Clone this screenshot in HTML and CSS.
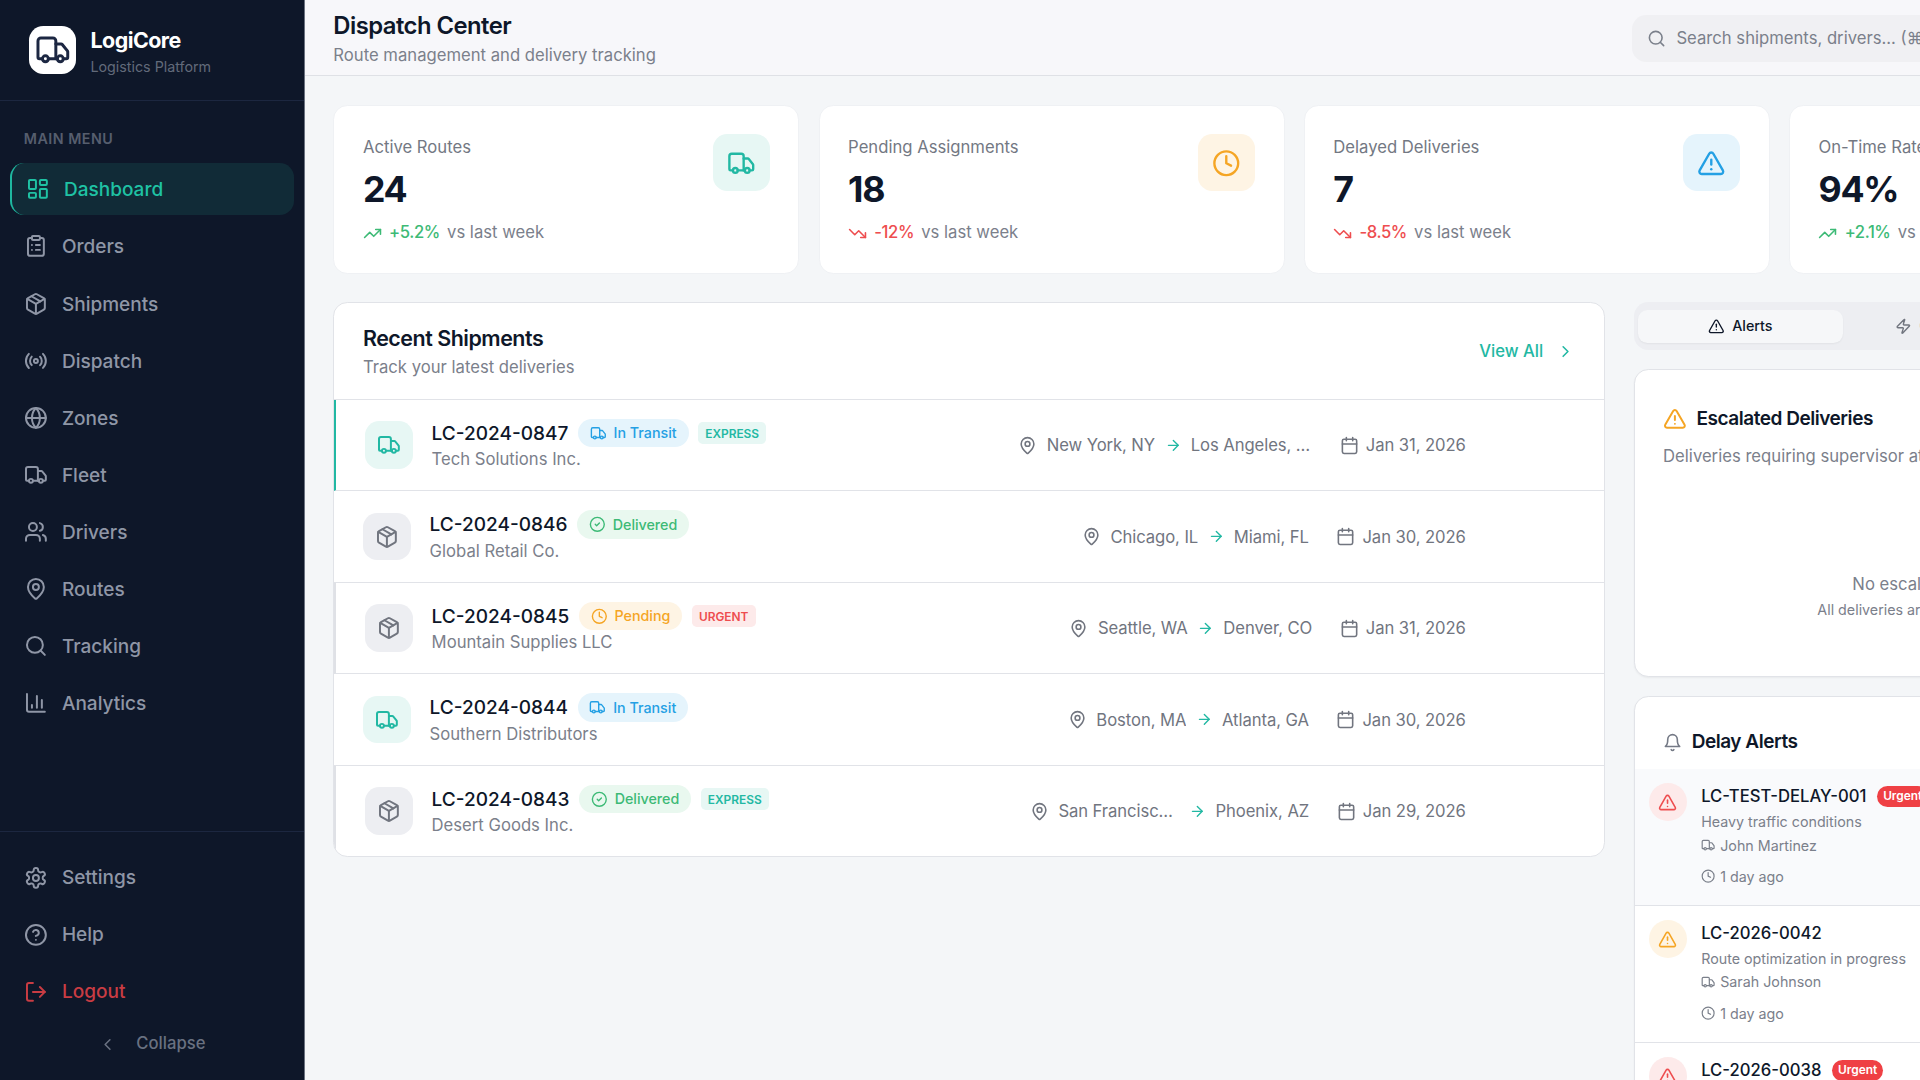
FILE: index.html
```html
<!DOCTYPE html>
<html lang="en">
<head>
    <meta charset="UTF-8">
    <meta name="viewport" content="width=device-width, initial-scale=1.0">
    <title>LogiCore - Dispatch Center</title>
    <link rel="stylesheet" href="styles.css">
</head>
<body>
    <!-- Icon set -->
    <svg class="sprite" xmlns="http://www.w3.org/2000/svg">
        <symbol id="i-dashboard" viewBox="0 0 24 24"><rect x="3" y="3" width="7" height="9" rx="1"/><rect x="14" y="3" width="7" height="5" rx="1"/><rect x="14" y="12" width="7" height="9" rx="1"/><rect x="3" y="16" width="7" height="5" rx="1"/></symbol>
        <symbol id="i-clipboard" viewBox="0 0 24 24"><rect x="8" y="2" width="8" height="4" rx="1"/><path d="M16 4h2a2 2 0 0 1 2 2v14a2 2 0 0 1-2 2H6a2 2 0 0 1-2-2V6a2 2 0 0 1 2-2h2"/><path d="M12 11h4M12 16h4M8 11h.01M8 16h.01"/></symbol>
        <symbol id="i-package" viewBox="0 0 24 24"><path d="M11 21.73a2 2 0 0 0 2 0l7-4A2 2 0 0 0 21 16V8a2 2 0 0 0-1-1.73l-7-4a2 2 0 0 0-2 0l-7 4A2 2 0 0 0 3 8v8a2 2 0 0 0 1 1.73z"/><path d="M12 22V12"/><path d="M3.29 7 12 12l8.71-5"/><path d="m7.5 4.27 9 5.15"/></symbol>
        <symbol id="i-radio" viewBox="0 0 24 24"><path d="M4.9 19.1C1 15.2 1 8.8 4.9 4.9"/><path d="M7.8 16.2c-2.3-2.3-2.3-6.1 0-8.5"/><circle cx="12" cy="12" r="2"/><path d="M16.2 7.8c2.3 2.3 2.3 6.1 0 8.5"/><path d="M19.1 4.9C23 8.8 23 15.1 19.1 19"/></symbol>
        <symbol id="i-globe" viewBox="0 0 24 24"><circle cx="12" cy="12" r="10"/><path d="M12 2a14.5 14.5 0 0 0 0 20 14.5 14.5 0 0 0 0-20"/><path d="M2 12h20"/></symbol>
        <symbol id="i-truck" viewBox="0 0 24 24"><path d="M14 18V6a2 2 0 0 0-2-2H4a2 2 0 0 0-2 2v11a1 1 0 0 0 1 1h2"/><path d="M15 18H9"/><path d="M19 18h2a1 1 0 0 0 1-1v-3.65a1 1 0 0 0-.22-.624l-3.48-4.35A1 1 0 0 0 17.52 8H14"/><circle cx="17" cy="18" r="2"/><circle cx="7" cy="18" r="2"/></symbol>
        <symbol id="i-users" viewBox="0 0 24 24"><path d="M16 21v-2a4 4 0 0 0-4-4H6a4 4 0 0 0-4 4v2"/><circle cx="9" cy="7" r="4"/><path d="M22 21v-2a4 4 0 0 0-3-3.87"/><path d="M16 3.13a4 4 0 0 1 0 7.75"/></symbol>
        <symbol id="i-pin" viewBox="0 0 24 24"><path d="M20 10c0 4.993-5.539 10.193-7.399 11.799a1 1 0 0 1-1.202 0C9.539 20.193 4 14.993 4 10a8 8 0 0 1 16 0"/><circle cx="12" cy="10" r="3"/></symbol>
        <symbol id="i-search" viewBox="0 0 24 24"><circle cx="11" cy="11" r="8"/><path d="m21 21-4.3-4.3"/></symbol>
        <symbol id="i-chart" viewBox="0 0 24 24"><path d="M3 3v16a2 2 0 0 0 2 2h16"/><path d="M18 17V9M13 17V5M8 17v-3"/></symbol>
        <symbol id="i-settings" viewBox="0 0 24 24"><path d="M12.22 2h-.44a2 2 0 0 0-2 2v.18a2 2 0 0 1-1 1.73l-.43.25a2 2 0 0 1-2 0l-.15-.08a2 2 0 0 0-2.73.73l-.22.38a2 2 0 0 0 .73 2.73l.15.1a2 2 0 0 1 1 1.72v.51a2 2 0 0 1-1 1.74l-.15.09a2 2 0 0 0-.73 2.73l.22.38a2 2 0 0 0 2.73.73l.15-.08a2 2 0 0 1 2 0l.43.25a2 2 0 0 1 1 1.73V20a2 2 0 0 0 2 2h.44a2 2 0 0 0 2-2v-.18a2 2 0 0 1 1-1.73l.43-.25a2 2 0 0 1 2 0l.15.08a2 2 0 0 0 2.73-.73l.22-.39a2 2 0 0 0-.73-2.73l-.15-.08a2 2 0 0 1-1-1.74v-.5a2 2 0 0 1 1-1.74l.15-.09a2 2 0 0 0 .73-2.73l-.22-.38a2 2 0 0 0-2.73-.73l-.15.08a2 2 0 0 1-2 0l-.43-.25a2 2 0 0 1-1-1.73V4a2 2 0 0 0-2-2z"/><circle cx="12" cy="12" r="3"/></symbol>
        <symbol id="i-help" viewBox="0 0 24 24"><circle cx="12" cy="12" r="10"/><path d="M9.09 9a3 3 0 0 1 5.83 1c0 2-3 3-3 3"/><path d="M12 17h.01"/></symbol>
        <symbol id="i-logout" viewBox="0 0 24 24"><path d="M9 21H5a2 2 0 0 1-2-2V5a2 2 0 0 1 2-2h4"/><path d="m16 17 5-5-5-5"/><path d="M21 12H9"/></symbol>
        <symbol id="i-left" viewBox="0 0 24 24"><path d="m15 18-6-6 6-6"/></symbol>
        <symbol id="i-right" viewBox="0 0 24 24"><path d="m9 18 6-6-6-6"/></symbol>
        <symbol id="i-arrow" viewBox="0 0 24 24"><path d="M5 12h14"/><path d="m12 5 7 7-7 7"/></symbol>
        <symbol id="i-up" viewBox="0 0 24 24"><path d="m22 7-8.5 8.5-5-5L2 17"/><path d="M16 7h6v6"/></symbol>
        <symbol id="i-down" viewBox="0 0 24 24"><path d="m22 17-8.5-8.5-5 5L2 7"/><path d="M16 17h6v-6"/></symbol>
        <symbol id="i-clock" viewBox="0 0 24 24"><circle cx="12" cy="12" r="10"/><path d="M12 6v6l4 2"/></symbol>
        <symbol id="i-alert" viewBox="0 0 24 24"><path d="m21.73 18-8-14a2 2 0 0 0-3.48 0l-8 14A2 2 0 0 0 4 21h16a2 2 0 0 0 1.73-3"/><path d="M12 9v4"/><path d="M12 17h.01"/></symbol>
        <symbol id="i-check" viewBox="0 0 24 24"><circle cx="12" cy="12" r="10"/><path d="m9 12 2 2 4-4"/></symbol>
        <symbol id="i-calendar" viewBox="0 0 24 24"><path d="M8 2v4M16 2v4"/><rect x="3" y="4" width="18" height="18" rx="2"/><path d="M3 10h18"/></symbol>
        <symbol id="i-zap" viewBox="0 0 24 24"><path d="M4 14a1 1 0 0 1-.78-1.63l9.9-10.2a.5.5 0 0 1 .86.46l-1.92 6.02A1 1 0 0 0 13 10h7a1 1 0 0 1 .78 1.63l-9.9 10.2a.5.5 0 0 1-.86-.46l1.92-6.02A1 1 0 0 0 11 14z"/></symbol>
        <symbol id="i-bell" viewBox="0 0 24 24"><path d="M6 8a6 6 0 0 1 12 0c0 7 3 9 3 9H3s3-2 3-9"/><path d="M10.3 21a1.94 1.94 0 0 0 3.4 0"/></symbol>
    </svg>

    <div class="app">
        <aside class="sidebar">
            <div class="brand">
                <div class="brand-logo"><svg class="icon icon-30"><use href="#i-truck"/></svg></div>
                <div>
                    <div class="brand-name">LogiCore</div>
                    <div class="brand-sub">Logistics Platform</div>
                </div>
            </div>
            <nav class="nav">
                <div class="nav-label">Main Menu</div>
                <a class="nav-item active"><svg class="icon icon-20"><use href="#i-dashboard"/></svg>Dashboard</a>
                <a class="nav-item"><svg class="icon icon-20"><use href="#i-clipboard"/></svg>Orders</a>
                <a class="nav-item"><svg class="icon icon-20"><use href="#i-package"/></svg>Shipments</a>
                <a class="nav-item"><svg class="icon icon-20"><use href="#i-radio"/></svg>Dispatch</a>
                <a class="nav-item"><svg class="icon icon-20"><use href="#i-globe"/></svg>Zones</a>
                <a class="nav-item"><svg class="icon icon-20"><use href="#i-truck"/></svg>Fleet</a>
                <a class="nav-item"><svg class="icon icon-20"><use href="#i-users"/></svg>Drivers</a>
                <a class="nav-item"><svg class="icon icon-20"><use href="#i-pin"/></svg>Routes</a>
                <a class="nav-item"><svg class="icon icon-20"><use href="#i-search"/></svg>Tracking</a>
                <a class="nav-item"><svg class="icon icon-20"><use href="#i-chart"/></svg>Analytics</a>
            </nav>
            <div class="sidebar-footer">
                <a class="nav-item"><svg class="icon icon-20"><use href="#i-settings"/></svg>Settings</a>
                <a class="nav-item"><svg class="icon icon-20"><use href="#i-help"/></svg>Help</a>
                <a class="nav-item logout"><svg class="icon icon-20"><use href="#i-logout"/></svg>Logout</a>
                <a class="collapse"><svg class="icon icon-16"><use href="#i-left"/></svg>Collapse</a>
            </div>
        </aside>

        <div class="main">
            <header class="header">
                <div>
                    <h1 class="page-title">Dispatch Center</h1>
                    <p class="page-sub">Route management and delivery tracking</p>
                </div>
                <div class="header-tools">
                    <div class="search"><svg class="icon icon-16"><use href="#i-search"/></svg><span>Search shipments, drivers... (⌘K)</span></div>
                </div>
            </header>

            <div class="content">
                <!-- Stat cards -->
                <section class="stats">
                    <div class="stat-card">
                        <div>
                            <div class="stat-label">Active Routes</div>
                            <div class="stat-value">24</div>
                            <div class="stat-change up"><svg class="icon icon-16"><use href="#i-up"/></svg><b>+5.2%</b><span>vs last week</span></div>
                        </div>
                        <div class="stat-icon teal"><svg class="icon icon-24"><use href="#i-truck"/></svg></div>
                    </div>
                    <div class="stat-card">
                        <div>
                            <div class="stat-label">Pending Assignments</div>
                            <div class="stat-value">18</div>
                            <div class="stat-change down"><svg class="icon icon-16"><use href="#i-down"/></svg><b>-12%</b><span>vs last week</span></div>
                        </div>
                        <div class="stat-icon amber"><svg class="icon icon-24"><use href="#i-clock"/></svg></div>
                    </div>
                    <div class="stat-card">
                        <div>
                            <div class="stat-label">Delayed Deliveries</div>
                            <div class="stat-value">7</div>
                            <div class="stat-change down"><svg class="icon icon-16"><use href="#i-down"/></svg><b>-8.5%</b><span>vs last week</span></div>
                        </div>
                        <div class="stat-icon blue"><svg class="icon icon-24"><use href="#i-alert"/></svg></div>
                    </div>
                    <div class="stat-card">
                        <div>
                            <div class="stat-label">On-Time Rate</div>
                            <div class="stat-value">94%</div>
                            <div class="stat-change up"><svg class="icon icon-16"><use href="#i-up"/></svg><b>+2.1%</b><span>vs last week</span></div>
                        </div>
                        <div class="stat-icon teal"><svg class="icon icon-24"><use href="#i-check"/></svg></div>
                    </div>
                </section>

                <div class="columns">
                    <!-- Recent shipments -->
                    <section class="card shipments">
                        <div class="shipments-head">
                            <div>
                                <h2 class="card-title large">Recent Shipments</h2>
                                <p class="card-sub">Track your latest deliveries</p>
                            </div>
                            <a class="view-all">View All<svg class="icon icon-16"><use href="#i-right"/></svg></a>
                        </div>
                        <div class="row bar bar-teal">
                            <div class="row-icon teal"><svg class="icon icon-20"><use href="#i-truck"/></svg></div>
                            <div class="row-info">
                                <div class="row-title"><span>LC-2024-0847</span><span class="badge blue"><svg class="icon icon-14"><use href="#i-truck"/></svg>In Transit</span><span class="tag teal">EXPRESS</span></div>
                                <div class="row-sub">Tech Solutions Inc.</div>
                            </div>
                            <div class="route"><svg class="icon icon-16"><use href="#i-pin"/></svg><span>New York, NY</span><svg class="icon icon-14 arrow"><use href="#i-arrow"/></svg><span>Los Angeles, CA</span></div>
                            <div class="date"><svg class="icon icon-16"><use href="#i-calendar"/></svg>Jan 31, 2026</div>
                        </div>
                        <div class="row">
                            <div class="row-icon gray"><svg class="icon icon-20"><use href="#i-package"/></svg></div>
                            <div class="row-info">
                                <div class="row-title"><span>LC-2024-0846</span><span class="badge green"><svg class="icon icon-14"><use href="#i-check"/></svg>Delivered</span></div>
                                <div class="row-sub">Global Retail Co.</div>
                            </div>
                            <div class="route"><svg class="icon icon-16"><use href="#i-pin"/></svg><span>Chicago, IL</span><svg class="icon icon-14 arrow"><use href="#i-arrow"/></svg><span>Miami, FL</span></div>
                            <div class="date"><svg class="icon icon-16"><use href="#i-calendar"/></svg>Jan 30, 2026</div>
                        </div>
                        <div class="row bar">
                            <div class="row-icon gray"><svg class="icon icon-20"><use href="#i-package"/></svg></div>
                            <div class="row-info">
                                <div class="row-title"><span>LC-2024-0845</span><span class="badge amber"><svg class="icon icon-14"><use href="#i-clock"/></svg>Pending</span><span class="tag red">URGENT</span></div>
                                <div class="row-sub">Mountain Supplies LLC</div>
                            </div>
                            <div class="route"><svg class="icon icon-16"><use href="#i-pin"/></svg><span>Seattle, WA</span><svg class="icon icon-14 arrow"><use href="#i-arrow"/></svg><span>Denver, CO</span></div>
                            <div class="date"><svg class="icon icon-16"><use href="#i-calendar"/></svg>Jan 31, 2026</div>
                        </div>
                        <div class="row">
                            <div class="row-icon teal"><svg class="icon icon-20"><use href="#i-truck"/></svg></div>
                            <div class="row-info">
                                <div class="row-title"><span>LC-2024-0844</span><span class="badge blue"><svg class="icon icon-14"><use href="#i-truck"/></svg>In Transit</span></div>
                                <div class="row-sub">Southern Distributors</div>
                            </div>
                            <div class="route"><svg class="icon icon-16"><use href="#i-pin"/></svg><span>Boston, MA</span><svg class="icon icon-14 arrow"><use href="#i-arrow"/></svg><span>Atlanta, GA</span></div>
                            <div class="date"><svg class="icon icon-16"><use href="#i-calendar"/></svg>Jan 30, 2026</div>
                        </div>
                        <div class="row bar">
                            <div class="row-icon gray"><svg class="icon icon-20"><use href="#i-package"/></svg></div>
                            <div class="row-info">
                                <div class="row-title"><span>LC-2024-0843</span><span class="badge green"><svg class="icon icon-14"><use href="#i-check"/></svg>Delivered</span><span class="tag teal">EXPRESS</span></div>
                                <div class="row-sub">Desert Goods Inc.</div>
                            </div>
                            <div class="route"><svg class="icon icon-16"><use href="#i-pin"/></svg><span>San Francisco, CA</span><svg class="icon icon-14 arrow"><use href="#i-arrow"/></svg><span>Phoenix, AZ</span></div>
                            <div class="date"><svg class="icon icon-16"><use href="#i-calendar"/></svg>Jan 29, 2026</div>
                        </div>
                    </section>

                    <!-- Alerts column -->
                    <aside class="side">
                        <div class="tabs">
                            <div class="tab active"><svg class="icon icon-14"><use href="#i-alert"/></svg>Alerts</div>
                            <div class="tab"><svg class="icon icon-14"><use href="#i-zap"/></svg>Operations</div>
                            <div class="tab"><svg class="icon icon-14"><use href="#i-users"/></svg>Drivers</div>
                        </div>

                        <section class="card escalated">
                            <h2 class="card-title"><svg class="icon icon-20 amber-text"><use href="#i-alert"/></svg>Escalated Deliveries</h2>
                            <p class="card-sub">Deliveries requiring supervisor attention</p>
                            <div class="empty">
                                <p>No escalated deliveries</p>
                                <small>All deliveries are proceeding normally</small>
                            </div>
                        </section>

                        <section class="card delays">
                            <h2 class="card-title"><svg class="icon icon-16 muted"><use href="#i-bell"/></svg>Delay Alerts</h2>
                            <div class="alert unread">
                                <div class="alert-icon red"><svg class="icon icon-16"><use href="#i-alert"/></svg></div>
                                <div>
                                    <div class="alert-title">LC-TEST-DELAY-001<span class="urgent">Urgent</span></div>
                                    <div class="alert-line">Heavy traffic conditions</div>
                                    <div class="alert-line"><svg class="icon icon-12"><use href="#i-truck"/></svg>John Martinez</div>
                                    <div class="alert-line time"><svg class="icon icon-12"><use href="#i-clock"/></svg>1 day ago</div>
                                </div>
                            </div>
                            <div class="alert">
                                <div class="alert-icon amber"><svg class="icon icon-16"><use href="#i-alert"/></svg></div>
                                <div>
                                    <div class="alert-title">LC-2026-0042</div>
                                    <div class="alert-line">Route optimization in progress</div>
                                    <div class="alert-line"><svg class="icon icon-12"><use href="#i-truck"/></svg>Sarah Johnson</div>
                                    <div class="alert-line time"><svg class="icon icon-12"><use href="#i-clock"/></svg>1 day ago</div>
                                </div>
                            </div>
                            <div class="alert">
                                <div class="alert-icon red"><svg class="icon icon-16"><use href="#i-alert"/></svg></div>
                                <div>
                                    <div class="alert-title">LC-2026-0038<span class="urgent">Urgent</span></div>
                                </div>
                            </div>
                        </section>
                    </aside>
                </div>
            </div>
        </div>
    </div>
</body>
</html>
```
FILE: styles.css
```css
* {
    box-sizing: border-box;
    margin: 0;
    padding: 0;
}
html {
    font-size: 19.05px;
}
body {
    font-family: Inter, "Noto Sans", sans-serif;
    font-size: 0.875rem;
    line-height: 1.25rem;
    color: #0e1729;
    background: #f4f6f8;
    height: 100vh;
    overflow: hidden;
}
.sprite {
    display: none;
}
.app {
    display: flex;
    width: 119.875rem;
    height: 100vh;
}

/* Icons */
.icon {
    flex: none;
    fill: none;
    stroke: currentColor;
    stroke-width: 2;
    stroke-linecap: round;
    stroke-linejoin: round;
}
.icon-12 { width: 0.75rem; height: 0.75rem; }
.icon-14 { width: 0.875rem; height: 0.875rem; }
.icon-16 { width: 1rem; height: 1rem; }
.icon-20 { width: 1.25rem; height: 1.25rem; }
.icon-24 { width: 1.5rem; height: 1.5rem; }
.icon-30 { width: 1.875rem; height: 1.875rem; }

/* Colour tones */
.teal { color: #22b8a3; background: #e7f7f4; }
.amber { color: #f5a524; background: #fef4e4; }
.blue { color: #24a0e4; background: #e5f4fc; }
.green { color: #3dba76; background: #e9f8ef; }
.red { color: #ee4d4f; background: #fdeaea; }
.gray { color: #71757f; background: #edeef2; }
.amber-text { color: #f5a524; }
.muted { color: #757a86; }

/* Sidebar */
.sidebar {
    display: flex;
    flex-direction: column;
    width: 16rem;
    flex: none;
    background: #0e1729;
    border-right: 1px solid #6b7280;
}
.brand {
    display: flex;
    align-items: center;
    gap: 0.75rem;
    height: 5.3125rem;
    padding: 0 1.5rem;
    border-bottom: 1px solid #1c2740;
}
.brand-logo {
    display: flex;
    align-items: center;
    justify-content: center;
    width: 2.5rem;
    height: 2.5rem;
    border-radius: 0.75rem;
    background: #fff;
    color: #1c2742;
}
.brand-name {
    font-size: 1.125rem;
    line-height: 1.75rem;
    font-weight: 700;
    letter-spacing: -0.025em;
    color: #fff;
}
.brand-sub {
    font-size: 0.75rem;
    line-height: 1rem;
    color: #626a7a;
}
.nav {
    display: flex;
    flex-direction: column;
    gap: 0.25rem;
    padding: 1.4375rem 0.5rem 0;
}
.nav-label {
    padding-left: 0.75rem;
    margin-bottom: 0.5625rem;
    font-size: 0.75rem;
    line-height: 1rem;
    font-weight: 600;
    letter-spacing: 0.035em;
    text-transform: uppercase;
    color: #565e6e;
}
.nav-item {
    display: flex;
    align-items: center;
    gap: 0.75rem;
    height: 2.75rem;
    padding: 2px 0.75rem 0;
    border-radius: 0.75rem;
    font-size: 1rem;
    font-weight: 500;
    color: #8f96a6;
}
.nav-item .icon {
    margin-top: -2px;
}
.nav-item.active {
    color: #1fc2a4;
    background: #112b37;
    border-left: 2px solid #1fb8a0;
}
.nav-item.logout {
    color: #c93c43;
}
.sidebar-footer {
    display: flex;
    flex-direction: column;
    gap: 0.25rem;
    margin-top: auto;
    padding: 1rem 0.5rem 0.75rem;
    border-top: 1px solid #1c2740;
}
.sidebar-footer .nav-item {
    padding-top: 0;
}
.sidebar-footer .icon {
    margin-top: 0;
}
.collapse {
    display: flex;
    align-items: center;
    justify-content: center;
    gap: 1rem;
    height: 2.25rem;
    font-weight: 500;
    color: #697181;
}

/* Header */
.main {
    flex: 1;
    min-width: 0;
}
.header {
    display: flex;
    align-items: center;
    justify-content: space-between;
    height: 4rem;
    padding: 2px 1.5rem 0;
    background: #f7f7fa;
    border-bottom: 1px solid #dfe1e6;
}
.page-title {
    font-size: 1.25rem;
    line-height: 1.75rem;
    font-weight: 600;
    letter-spacing: -0.022em;
}
.page-sub {
    line-height: 1.3125rem;
}
.page-sub,
.card-sub {
    color: #7b808b;
}
.header-tools {
    width: 32.6875rem;
}
.search {
    display: flex;
    align-items: center;
    gap: 0.5625rem;
    width: 18rem;
    height: 2.5rem;
    padding: 0 0.75rem;
    border-radius: 0.75rem;
    background: #f0f0f3;
    color: #7b808b;
    white-space: nowrap;
}

/* Stats */
.content {
    padding: 1.5rem;
}
.stats {
    display: grid;
    grid-template-columns: repeat(4, 1fr);
    gap: 1rem;
    margin-bottom: 1.5rem;
}
.stat-card {
    display: flex;
    justify-content: space-between;
    align-items: flex-start;
    height: 8.875rem;
    padding: 1.5rem;
    background: #fff;
    border: 1px solid #eff1f4;
    border-radius: 0.75rem;
}
.stat-label {
    line-height: 1.375rem;
    color: #737883;
}
.stat-value {
    margin: 0.375rem 0 0.5625rem;
    font-size: 1.875rem;
    line-height: 2.25rem;
    font-weight: 700;
    letter-spacing: -0.035em;
}
.stat-change {
    display: flex;
    align-items: center;
    gap: 0.375rem;
}
.stat-change b {
    font-weight: 500;
    letter-spacing: -0.025em;
}
.stat-change span {
    color: #7b808b;
}
.stat-change.up { color: #3dba76; }
.stat-change.down { color: #ee4d4f; }
.stat-icon {
    display: flex;
    align-items: center;
    justify-content: center;
    width: 3rem;
    height: 3rem;
    border-radius: 0.75rem;
}

/* Cards */
.columns {
    display: grid;
    grid-template-columns: repeat(3, 1fr);
    gap: 1.5rem;
    align-items: start;
}
.card {
    background: #fff;
    border: 1px solid #e1e3e8;
    border-radius: 0.75rem;
    overflow: hidden;
}
.card-title {
    display: flex;
    align-items: center;
    gap: 0.5rem;
    font-size: 1rem;
    line-height: 1.5rem;
    font-weight: 600;
    letter-spacing: -0.025em;
}
.card-title.large {
    margin-bottom: 0.125rem;
    font-size: 1.125rem;
    line-height: 1.6875rem;
    letter-spacing: -0.022em;
}

/* Shipments */
.shipments {
    grid-column: span 2;
}
.shipments-head {
    display: flex;
    align-items: center;
    justify-content: space-between;
    height: 5.0625rem;
    padding: 0 1.5rem;
    border-bottom: 1px solid #e1e3e8;
}
.view-all {
    display: flex;
    align-items: center;
    gap: 0.6875rem;
    padding-top: 2px;
    font-weight: 500;
    color: #22b8a3;
}
.view-all .icon {
    margin-top: -2px;
}
.row {
    display: flex;
    align-items: center;
    height: 4.805rem;
    padding: 0 7.25rem 0 1.5rem;
    border-bottom: 1px solid #e1e3e8;
}
.row:last-child {
    height: 4.75rem;
    border-bottom: none;
}
.row.bar {
    border-left: 2px solid #dfe1e6;
}
.row.bar-teal {
    border-left-color: #22b8a3;
}
.row-icon {
    display: flex;
    align-items: center;
    justify-content: center;
    width: 2.5rem;
    height: 2.5rem;
    margin-right: 1rem;
    border-radius: 0.75rem;
}
.row-info {
    flex: 1;
    padding-top: 1px;
}
.row-title {
    display: flex;
    align-items: center;
    gap: 0.5rem;
    height: 1.5rem;
    font-size: 1rem;
    font-weight: 500;
}
.row-title > span:first-child {
    padding-top: 1px;
}
.row-sub {
    line-height: 1.3125rem;
    color: #7b808b;
}
.badge {
    display: flex;
    align-items: center;
    gap: 0.375rem;
    height: 1.5rem;
    padding: 0 0.625rem;
    border-radius: 1rem;
    font-size: 0.75rem;
}
.tag {
    height: 1.1875rem;
    padding: 0 0.375rem;
    border-radius: 0.25rem;
    font-size: 0.625rem;
    line-height: 1.25rem;
    font-weight: 600;
}
.route,
.date {
    display: flex;
    align-items: center;
    gap: 0.5rem;
    padding-top: 2px;
    letter-spacing: -0.005em;
    color: #71757f;
}
.route .icon,
.date .icon {
    margin-top: -2px;
}
.route span {
    max-width: 6.375rem;
    overflow: hidden;
    text-overflow: ellipsis;
    white-space: nowrap;
}
.route .arrow {
    color: #22b8a3;
}
.date {
    gap: 0.375rem;
    margin-left: 1.4375rem;
}

/* Alerts column */
.side {
    display: flex;
    flex-direction: column;
    gap: 1rem;
}
.tabs {
    display: flex;
    height: 2.5rem;
    padding: 0.375rem 0.1875rem 0.375rem 0.25rem;
    border-radius: 0.75rem;
    background: #edeef2;
}
.tab {
    display: flex;
    flex: 1;
    align-items: center;
    justify-content: center;
    gap: 0.375rem;
    border-radius: 0.5rem;
    font-size: 0.75rem;
    font-weight: 500;
    color: #71757f;
}
.tab.active {
    background: #f6f7f9;
    color: #0e1729;
    box-shadow: 0 1px 2px rgba(0, 0, 0, 0.05);
}
.side .card {
    box-shadow: 0 1px 2px rgba(0, 0, 0, 0.05);
}
.escalated {
    height: 16.1875rem;
    padding: 1.5625rem 1.5rem;
}
.escalated .card-title {
    height: 2rem;
    margin-bottom: 0.375rem;
}
.empty {
    padding-top: 5.46875rem;
    text-align: center;
    color: #7b808b;
}
.empty small {
    display: block;
    margin-top: 0.15625rem;
    font-size: 0.75rem;
    line-height: 1rem;
}
.delays .card-title {
    padding: 1.59375rem 1.5rem 0.65625rem;
}
.alert {
    display: flex;
    gap: 0.75rem;
    height: 7.1875rem;
    padding: 0.75rem;
    border-bottom: 1px solid #e1e3e8;
}
.alert.unread {
    background: #f9fafc;
}
.alert-icon {
    display: flex;
    flex: none;
    align-items: center;
    justify-content: center;
    width: 2rem;
    height: 2rem;
    border-radius: 50%;
}
.alert-title {
    display: flex;
    align-items: center;
    gap: 0.5625rem;
    margin-bottom: -0.125rem;
    line-height: 1.375rem;
    font-weight: 500;
}
.urgent {
    height: 1.09375rem;
    padding: 0 0.3125rem;
    border-radius: 1rem;
    background: #ef4044;
    color: #fff;
    font-size: 0.625rem;
    line-height: 1.09375rem;
    font-weight: 600;
}
.alert-line {
    display: flex;
    align-items: center;
    gap: 0.25rem;
    margin-top: 0.25rem;
    font-size: 0.75rem;
    line-height: 1rem;
    color: #7b808b;
}
.alert-line.time {
    margin-top: 0.65625rem;
}
```
